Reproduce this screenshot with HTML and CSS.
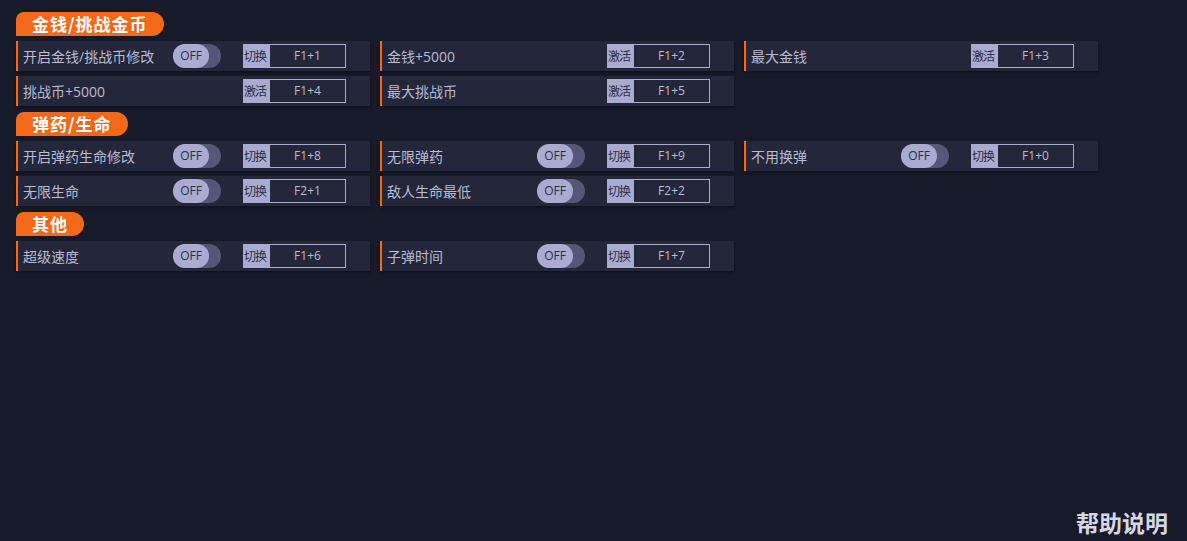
FILE: index.html
```html
<!DOCTYPE html>
<html lang="zh">

<head>
    <meta charset="utf-8">
    <meta name="viewport" content="width=device-width, initial-scale=1.0">
    <title>修改器</title>
    <link rel="stylesheet" href="styles.css">
</head>

<body>
    <main>
        <section class="gruppe">
            <h2 class="titel">金钱/挑战金币</h2>
            <div class="liste">
                <div class="rad">
                    <span class="navn">开启金钱/挑战币修改</span>
                    <span class="knap"><span class="kugle">OFF</span></span>
                    <span class="tast"><span class="type">切换</span><span class="kode">F1+1</span></span>
                </div>
                <div class="rad">
                    <span class="navn">金钱+5000</span>
                    <span></span>
                    <span class="tast"><span class="type">激活</span><span class="kode">F1+2</span></span>
                </div>
                <div class="rad">
                    <span class="navn">最大金钱</span>
                    <span></span>
                    <span class="tast"><span class="type">激活</span><span class="kode">F1+3</span></span>
                </div>
                <div class="rad">
                    <span class="navn">挑战币+5000</span>
                    <span></span>
                    <span class="tast"><span class="type">激活</span><span class="kode">F1+4</span></span>
                </div>
                <div class="rad">
                    <span class="navn">最大挑战币</span>
                    <span></span>
                    <span class="tast"><span class="type">激活</span><span class="kode">F1+5</span></span>
                </div>
            </div>
        </section>

        <section class="gruppe">
            <h2 class="titel">弹药/生命</h2>
            <div class="liste">
                <div class="rad">
                    <span class="navn">开启弹药生命修改</span>
                    <span class="knap"><span class="kugle">OFF</span></span>
                    <span class="tast"><span class="type">切换</span><span class="kode">F1+8</span></span>
                </div>
                <div class="rad">
                    <span class="navn">无限弹药</span>
                    <span class="knap"><span class="kugle">OFF</span></span>
                    <span class="tast"><span class="type">切换</span><span class="kode">F1+9</span></span>
                </div>
                <div class="rad">
                    <span class="navn">不用换弹</span>
                    <span class="knap"><span class="kugle">OFF</span></span>
                    <span class="tast"><span class="type">切换</span><span class="kode">F1+0</span></span>
                </div>
                <div class="rad">
                    <span class="navn">无限生命</span>
                    <span class="knap"><span class="kugle">OFF</span></span>
                    <span class="tast"><span class="type">切换</span><span class="kode">F2+1</span></span>
                </div>
                <div class="rad">
                    <span class="navn">敌人生命最低</span>
                    <span class="knap"><span class="kugle">OFF</span></span>
                    <span class="tast"><span class="type">切换</span><span class="kode">F2+2</span></span>
                </div>
            </div>
        </section>

        <section class="gruppe">
            <h2 class="titel">其他</h2>
            <div class="liste">
                <div class="rad">
                    <span class="navn">超级速度</span>
                    <span class="knap"><span class="kugle">OFF</span></span>
                    <span class="tast"><span class="type">切换</span><span class="kode">F1+6</span></span>
                </div>
                <div class="rad">
                    <span class="navn">子弹时间</span>
                    <span class="knap"><span class="kugle">OFF</span></span>
                    <span class="tast"><span class="type">切换</span><span class="kode">F1+7</span></span>
                </div>
            </div>
        </section>
    </main>

    <footer>
        <a class="hjaelp">帮助说明</a>
    </footer>
</body></html>
```

FILE: styles.css
```css
html,
body {
    margin: 0;
    height: 100%;
}

body {
    background-color: #171a29;
    font-family: "Open Sans", "Noto Sans CJK SC", sans-serif;
    display: flex;
    flex-direction: column;
    overflow: hidden;
}

main {
    padding: 12px 0 0 16px;
}

.gruppe {
    margin-bottom: 6px;
}

.titel {
    display: inline-block;
    margin: 0 0 5px 0;
    height: 24px;
    line-height: 24px;
    padding: 0 16px;
    background-color: #f4681a;
    color: #ffffff;
    font-family: "Noto Sans CJK SC", sans-serif;
    font-size: 17px;
    font-weight: bold;
    letter-spacing: 1px;
    border-radius: 8px 12px 12px 0;
}

.liste {
    display: grid;
    grid-template-columns: repeat(3, 354px);
    gap: 5px 10px;
}

.rad {
    height: 30px;
    box-sizing: border-box;
    border-left: 2px solid #f2691d;
    padding-left: 5px;
    background-color: #24263a;
    box-shadow: 0 2px 3px rgba(0, 0, 0, 0.35);
    display: grid;
    grid-template-columns: 150px 70px 103px;
    align-items: center;
}

.navn {
    color: #b9bcd2;
    font-size: 14px;
    white-space: nowrap;
}

.knap {
    width: 48px;
    height: 24px;
    border-radius: 12px;
    background-color: #545876;
    display: flex;
}

.kugle {
    width: 36px;
    height: 24px;
    border-radius: 12px;
    background-color: #a9acd0;
    color: #2b2e48;
    font-size: 12px;
    line-height: 24px;
    text-align: center;
}

.tast {
    display: flex;
    height: 24px;
    box-sizing: border-box;
    border: 1px solid #a9acd0;
    font-size: 12px;
    line-height: 22px;
}

.type {
    width: 26px;
    background-color: #a9acd0;
    color: #2b2e48;
    font-family: "Noto Sans CJK SC", sans-serif;
    letter-spacing: -1px;
}

.kode {
    flex: 1;
    text-align: center;
    color: #b9bcd3;
}

footer {
    margin-top: auto;
    text-align: right;
    padding: 0 19px 2px 0;
}

.hjaelp {
    color: #d5d7e4;
    font-family: "Noto Sans CJK SC", sans-serif;
    font-size: 23px;
    font-weight: bold;
}
```
